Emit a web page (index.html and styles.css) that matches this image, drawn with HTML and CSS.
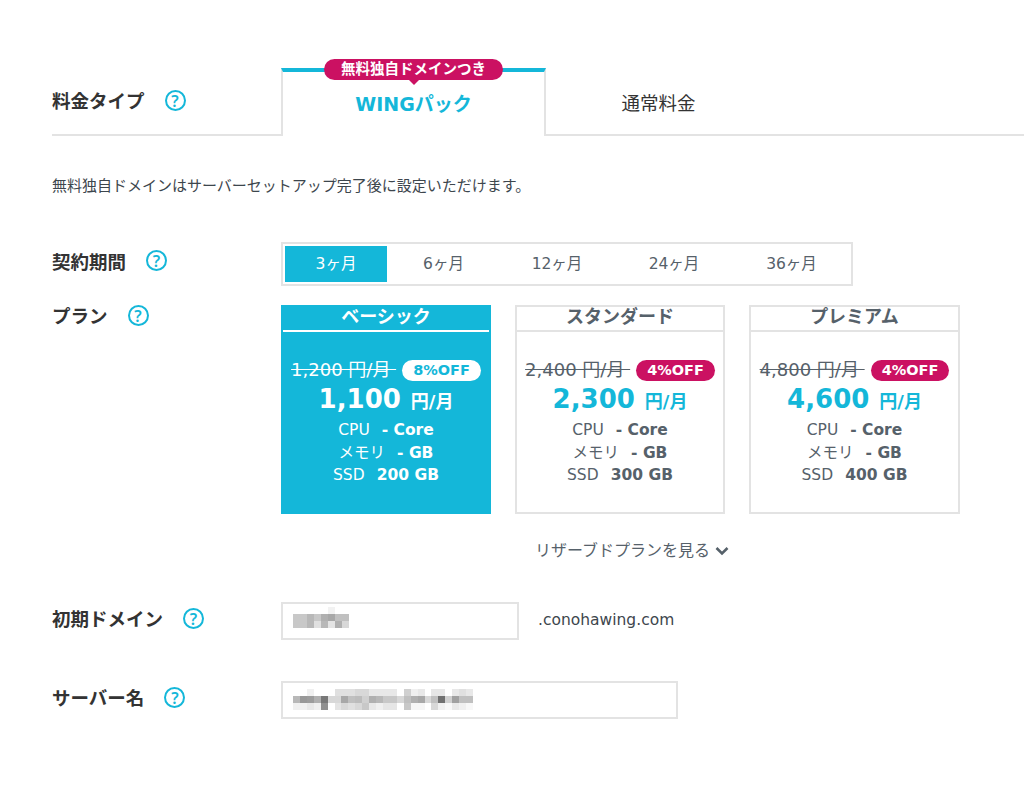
FILE: index.html
```html
<!DOCTYPE html>
<html lang="ja">
<head>
<meta charset="utf-8">
<title>料金プラン</title>
<link rel="stylesheet" href="styles.css">
</head>
<body>
<main class="page">
  <section class="type-row">
    <div class="type-label"><h2 class="label">料金タイプ</h2><span class="help">?</span></div>
    <div class="tab tab-active">
      <span class="ribbon">無料独自ドメインつき</span>
      <span class="tab-text">WINGパック</span>
    </div>
    <div class="tab tab-plain"><span class="tab-text">通常料金</span></div>
    <div class="type-rest"></div>
  </section>
  <p class="note">無料独自ドメインはサーバーセットアップ完了後に設定いただけます。</p>

  <section class="row row-term">
    <div class="side"><h2 class="label">契約期間</h2><span class="help">?</span></div>
    <div class="terms">
      <span class="term term-on">3ヶ月</span>
      <span class="term">6ヶ月</span>
      <span class="term">12ヶ月</span>
      <span class="term">24ヶ月</span>
      <span class="term">36ヶ月</span>
    </div>
  </section>

  <section class="row row-plan">
    <div class="side"><h2 class="label">プラン</h2><span class="help">?</span></div>
    <div class="plans">
      <article class="plan plan-on">
        <h3 class="plan-name">ベーシック</h3>
        <div class="price-old"><s>1,200 円/月&nbsp;</s><span class="off">8%OFF</span></div>
        <div class="price"><b>1,100</b><span class="unit">円/月</span></div>
        <div class="spec">CPU<b>- Core</b></div>
        <div class="spec">メモリ<b>- GB</b></div>
        <div class="spec">SSD<b>200 GB</b></div>
      </article>
      <article class="plan">
        <h3 class="plan-name">スタンダード</h3>
        <div class="price-old"><s>2,400 円/月&nbsp;</s><span class="off">4%OFF</span></div>
        <div class="price"><b>2,300</b><span class="unit">円/月</span></div>
        <div class="spec">CPU<b>- Core</b></div>
        <div class="spec">メモリ<b>- GB</b></div>
        <div class="spec">SSD<b>300 GB</b></div>
      </article>
      <article class="plan">
        <h3 class="plan-name">プレミアム</h3>
        <div class="price-old"><s>4,800 円/月&nbsp;</s><span class="off">4%OFF</span></div>
        <div class="price"><b>4,600</b><span class="unit">円/月</span></div>
        <div class="spec">CPU<b>- Core</b></div>
        <div class="spec">メモリ<b>- GB</b></div>
        <div class="spec">SSD<b>400 GB</b></div>
      </article>
    </div>
  </section>

  <div class="reserve">リザーブドプランを見る<svg class="chev" viewBox="0 0 14 10" width="14" height="10"><path d="M1.5 2 7 7.5 12.5 2" fill="none" stroke="#56616a" stroke-width="2.6"/></svg></div>

  <section class="row row-domain">
    <div class="side"><h2 class="label">初期ドメイン</h2><span class="help">?</span></div>
    <div class="input input-short">
      <svg class="mosaic" viewBox="0 0 8 3" width="56" height="21" shape-rendering="crispEdges">
        <rect x="5" y="0" width="1" height="1" fill="#f2f2f2"/>
        <rect x="0" y="1" width="1" height="1" fill="#c8c8c8"/><rect x="1" y="1" width="1" height="1" fill="#c8c8c8"/><rect x="2" y="1" width="1" height="1" fill="#b8b8b8"/><rect x="3" y="1" width="1" height="1" fill="#c8c8c8"/><rect x="4" y="1" width="1" height="1" fill="#b0b0b0"/><rect x="5" y="1" width="1" height="1" fill="#a8a8a8"/><rect x="6" y="1" width="1" height="1" fill="#c0c0c0"/><rect x="7" y="1" width="1" height="1" fill="#c0c0c0"/>
        <rect x="0" y="2" width="1" height="1" fill="#c8c8c8"/><rect x="1" y="2" width="1" height="1" fill="#c8c8c8"/><rect x="2" y="2" width="1" height="1" fill="#b8b8b8"/><rect x="3" y="2" width="1" height="1" fill="#e0e0e0"/><rect x="4" y="2" width="1" height="1" fill="#b8b8b8"/><rect x="5" y="2" width="1" height="1" fill="#e4e4e4"/><rect x="6" y="2" width="1" height="1" fill="#b0b0b0"/><rect x="7" y="2" width="1" height="1" fill="#d8d8d8"/>
      </svg>
    </div>
    <span class="suffix">.conohawing.com</span>
  </section>

  <section class="row row-server">
    <div class="side"><h2 class="label">サーバー名</h2><span class="help">?</span></div>
    <div class="input input-long">
      <svg class="mosaic" viewBox="0 0 26 3" width="180" height="21" shape-rendering="crispEdges">
        <g>
          <rect x="2" y="0" width="1" height="1" fill="#f0f0f0"/><rect x="6" y="0" width="3" height="1" fill="#e0e0e0"/><rect x="9" y="0" width="2" height="1" fill="#d8d8d8"/><rect x="11" y="0" width="4" height="1" fill="#e8e8e8"/><rect x="16" y="0" width="1" height="1" fill="#d0d0d0"/><rect x="17" y="0" width="1" height="1" fill="#f0f0f0"/><rect x="18" y="0" width="1" height="1" fill="#e8e8e8"/><rect x="20" y="0" width="2" height="1" fill="#e6e6e6"/><rect x="23" y="0" width="1" height="1" fill="#e8e8e8"/><rect x="24" y="0" width="1" height="1" fill="#e0e0e0"/><rect x="25" y="0" width="1" height="1" fill="#e8e8e8"/>
        </g>
        <g>
          <rect x="0" y="1" width="1" height="1" fill="#b8b8b8"/><rect x="1" y="1" width="1" height="1" fill="#989898"/><rect x="2" y="1" width="1" height="1" fill="#9c9c9c"/><rect x="3" y="1" width="1" height="1" fill="#b0b0b0"/><rect x="4" y="1" width="1" height="1" fill="#787878"/><rect x="5" y="1" width="2" height="1" fill="#d8d8d8"/><rect x="7" y="1" width="1" height="1" fill="#a8a8a8"/><rect x="8" y="1" width="1" height="1" fill="#c0c0c0"/><rect x="9" y="1" width="1" height="1" fill="#bcbcbc"/><rect x="10" y="1" width="1" height="1" fill="#d0d0d0"/><rect x="11" y="1" width="1" height="1" fill="#b0b0b0"/><rect x="12" y="1" width="1" height="1" fill="#b8b8b8"/><rect x="13" y="1" width="2" height="1" fill="#c8c8c8"/><rect x="15" y="1" width="1" height="1" fill="#d8d8d8"/><rect x="16" y="1" width="1" height="1" fill="#c0c0c0"/><rect x="17" y="1" width="1" height="1" fill="#b0b0b0"/><rect x="18" y="1" width="1" height="1" fill="#a8a8a8"/><rect x="19" y="1" width="1" height="1" fill="#d8d8d8"/><rect x="20" y="1" width="1" height="1" fill="#c0c0c0"/><rect x="21" y="1" width="1" height="1" fill="#707070"/><rect x="22" y="1" width="1" height="1" fill="#d0d0d0"/><rect x="23" y="1" width="1" height="1" fill="#a0a0a0"/><rect x="24" y="1" width="2" height="1" fill="#c0c0c0"/>
        </g>
        <g>
          <rect x="0" y="2" width="2" height="1" fill="#f0f0f0"/><rect x="2" y="2" width="1" height="1" fill="#e8e8e8"/><rect x="3" y="2" width="1" height="1" fill="#f0f0f0"/><rect x="4" y="2" width="1" height="1" fill="#909090"/><rect x="6" y="2" width="1" height="1" fill="#e4e4e4"/><rect x="7" y="2" width="1" height="1" fill="#d8d8d8"/><rect x="8" y="2" width="1" height="1" fill="#e0e0e0"/><rect x="9" y="2" width="1" height="1" fill="#d8d8d8"/><rect x="10" y="2" width="1" height="1" fill="#c8c8c8"/><rect x="11" y="2" width="1" height="1" fill="#e8e8e8"/><rect x="12" y="2" width="1" height="1" fill="#f0f0f0"/><rect x="13" y="2" width="2" height="1" fill="#e6e6e6"/><rect x="16" y="2" width="1" height="1" fill="#c8c8c8"/><rect x="17" y="2" width="2" height="1" fill="#f6f6f6"/><rect x="20" y="2" width="1" height="1" fill="#d8d8d8"/><rect x="21" y="2" width="1" height="1" fill="#f0f0f0"/><rect x="22" y="2" width="1" height="1" fill="#f8f8f8"/><rect x="23" y="2" width="1" height="1" fill="#e8e8e8"/><rect x="24" y="2" width="1" height="1" fill="#f0f0f0"/><rect x="25" y="2" width="1" height="1" fill="#f8f8f8"/>
        </g>
      </svg>
    </div>
  </section>
</main>
</body>
</html>
```
FILE: styles.css
```css
* { box-sizing: border-box; }
html, body { margin: 0; padding: 0; background: #fff; }
body {
  font-family: "DejaVu Sans", "Noto Sans CJK JP", sans-serif;
  color: #56616a;
  font-size: 14px;
}
.page { width: 1024px; height: 785px; overflow: hidden; padding-top: 68px; }
h2, h3, p { margin: 0; }
.label { font-size: 18.5px; font-weight: 700; color: #333; line-height: 24px; white-space: nowrap; }
.help {
  display: flex; align-items: center; justify-content: center; flex: none;
  width: 21px; height: 21px; margin-left: 20px; border: 2px solid #14b7d9; border-radius: 50%;
  color: #14b7d9; font-family: "Noto Sans", sans-serif; font-size: 16px; font-weight: 600; line-height: 1;
}
.type-row { display: flex; height: 68px; }
.type-label {
  width: 229px; margin-left: 52px; display: flex; align-items: flex-start; padding-top: 22px;
  border-bottom: 2px solid #e3e3e3;
}
.tab { position: relative; display: flex; justify-content: center; width: 265px; }
.tab-active {
  border-top: 4px solid #14b7d9; border-left: 2px solid #e3e3e3; border-right: 2px solid #e3e3e3;
}
.tab-plain { width: 225px; border-bottom: 2px solid #e3e3e3; }
.type-rest { flex: 1; border-bottom: 2px solid #e3e3e3; }
.tab-text { font-size: 19px; line-height: 24px; padding-top: 20px; }
.tab-active .tab-text { font-weight: 700; color: #14b7d9; }
.tab-plain .tab-text { padding-top: 24px; color: #333; font-size: 18.5px; }
.ribbon {
  position: absolute; top: -13px; left: 41px; width: 179px; height: 21px; border-radius: 11px;
  background: #cb1162; color: #fff; font-size: 14.5px; font-weight: 700; line-height: 20px; text-align: center;
}
.ribbon::after {
  content: ""; position: absolute; left: 50%; margin-left: -5px; top: 21px;
  border: 5px solid transparent; border-top: 5px solid #cb1162; border-bottom: 0;
}
.note { margin: 40px 0 0 52px; font-size: 15px; line-height: 20px; color: #3d464d; }
.row { display: flex; margin-left: 52px; }
.side { width: 229px; display: flex; flex: none; }
.row-term { margin-top: 46px; height: 44px; }
.row-term .side { padding-top: 9px; }
.row-term .help { margin-top: -1px; }
.terms { display: flex; width: 572px; height: 44px; border: 2px solid #e3e3e3; padding: 2px; }
.term { text-align: center; line-height: 36px; font-size: 15.5px; }
.term:nth-child(1) { width: 102px; background: #14b7d9; color: #fff; }
.term:nth-child(2) { width: 113px; }
.term:nth-child(3) { width: 114px; }
.term:nth-child(4) { width: 120px; }
.term:nth-child(5) { width: 115px; }
.row-plan { margin-top: 19px; }
.plans { display: flex; gap: 24px; }
.plan { width: 210px; height: 209px; border: 2px solid #e3e3e3; text-align: center; }
.plan:last-child { width: 211px; }
.plan-on { background: #14b7d9; border-color: #14b7d9; color: #fff; }
.plan-name {
  font-size: 18px; line-height: 20px; height: 25px; border-bottom: 2px solid #e3e3e3; font-weight: 700;
}
.plan-on .plan-name { border-color: #fff; }
.price-old { margin-top: 22px; display: flex; align-items: center; justify-content: center; height: 28px; font-size: 18px; white-space: nowrap; }
.off {
  margin: 4px 0 0 6px; padding: 0 11px; height: 21px; border-radius: 11px; background: #cb1162; color: #fff;
  font-size: 14.5px; font-weight: 700; line-height: 21px;
}
.plan-on .off { background: #fff; color: #14b7d9; }
.price { color: #14b7d9; height: 37px; line-height: 34px; }
.plan-on .price { color: #fff; }
.price b { font-size: 26px; }
.unit { font-size: 18px; font-weight: 700; margin-left: 10px; }
.spec { font-size: 15.5px; line-height: 22.5px; }
.spec b { margin-left: 12px; }
.reserve { margin: 25px 0 0 535px; height: 24px; line-height: 24px; font-size: 16px; display: flex; align-items: center; }
.chev { margin-left: 5px; }
.row-domain { margin-top: 39px; align-items: flex-start; }
.row-domain .side { padding-top: 6px; }
.input { height: 38px; border: 2px solid #e3e3e3; padding: 3px 0 0 10px; background: #fff; }
.input-short { width: 238px; }
.input-long { width: 397px; padding-top: 6px; }
.mosaic { display: block; }
.suffix { margin: 9px 0 0 19px; font-size: 15.5px; color: #3d464d; }
.row-server { margin-top: 41px; }
.row-server .side { padding-top: 6px; }
```
